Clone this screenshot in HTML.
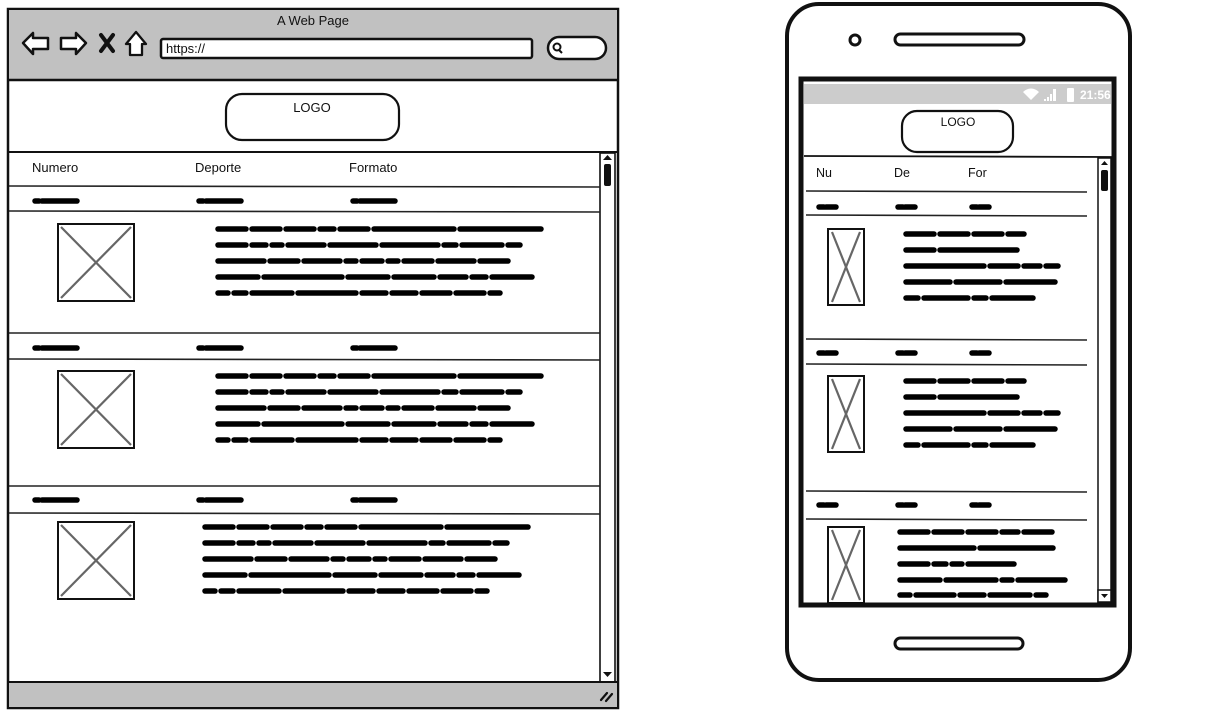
<!DOCTYPE html>
<html><head><meta charset="utf-8"><style>
html,body{margin:0;padding:0;background:#fff;width:1210px;height:718px;overflow:hidden}
svg{display:block}
text{font-family:"Liberation Sans",sans-serif;fill:#111}
.s{stroke:#000;stroke-width:5.5;stroke-linecap:round;fill:none}
.ln{stroke:#222;stroke-width:1.6;fill:none}
.x{stroke:#666;stroke-width:2.2}
</style></head><body>
<svg width="1210" height="718" viewBox="0 0 1210 718" xmlns="http://www.w3.org/2000/svg">
<defs>
<g id="bh">
 <line class="s" x1="1" y1="0" x2="43" y2="0" stroke-dasharray="4 3 40 3"/>
</g>
<g id="img">
 <rect x="0" y="0" width="76" height="77" fill="#fff" stroke="#111" stroke-width="2"/>
 <line class="x" x1="3" y1="3" x2="73" y2="74"/><line class="x" x1="73" y1="3" x2="3" y2="74"/>
</g>
<g id="pimg">
 <rect x="0" y="0" width="36" height="76" fill="#fff" stroke="#111" stroke-width="2"/>
 <line class="x" x1="4" y1="3" x2="32" y2="73"/><line class="x" x1="32" y1="3" x2="4" y2="73"/>
</g>
<g id="para">
 <line class="s" x1="2" y1="0" x2="325" y2="0" stroke-dasharray="28 6 28 6 28 6 14 6 28 6 80 6 81 200"/>
 <line class="s" x1="2" y1="16" x2="308" y2="16" stroke-dasharray="28 6 14 6 10 6 36 6 46 6 56 6 12 6 40 6 12 200"/>
 <line class="s" x1="2" y1="32" x2="300" y2="32" stroke-dasharray="46 6 28 6 36 6 10 6 20 6 10 6 28 6 36 6 28 200"/>
 <line class="s" x1="2" y1="48" x2="316" y2="48" stroke-dasharray="40 6 78 6 40 6 40 6 26 6 14 6 40 200"/>
 <line class="s" x1="2" y1="64" x2="290" y2="64" stroke-dasharray="10 6 12 6 40 6 58 6 24 6 24 6 28 6 28 6 10 200"/>
</g>
<g id="pb"><line class="s" x1="1" y1="0" x2="18" y2="0" stroke-dasharray="5 2 12 3"/></g>
<g id="ppara">
 <line class="s" x1="1" y1="0" x2="122" y2="0" stroke-dasharray="28 6 28 6 28 6 16 200"/>
 <line class="s" x1="1" y1="16" x2="112" y2="16" stroke-dasharray="28 6 78 200"/>
 <line class="s" x1="1" y1="32" x2="153" y2="32" stroke-dasharray="78 6 28 6 16 6 12 200"/>
 <line class="s" x1="1" y1="48" x2="150" y2="48" stroke-dasharray="44 6 44 6 50 200"/>
 <line class="s" x1="1" y1="64" x2="128" y2="64" stroke-dasharray="12 6 44 6 12 6 44 200"/>
</g>
</defs>

<!-- Browser -->
<rect x="8" y="9" width="610" height="699" fill="#fff" stroke="#111" stroke-width="2.5"/>
<rect x="9" y="10" width="608" height="70" fill="#c1c1c1"/>
<line x1="8" y1="80" x2="618" y2="80" stroke="#111" stroke-width="2.5"/>
<text x="313" y="25" font-size="13" text-anchor="middle">A Web Page</text>
<path d="M23 43 L33 33 L33 38 L48 38 L48 49 L33 49 L33 54 Z" fill="#fff" stroke="#111" stroke-width="2.5" stroke-linejoin="round"/>
<path d="M86 43 L76 33 L76 38 L61 38 L61 49 L76 49 L76 54 Z" fill="#fff" stroke="#111" stroke-width="2.5" stroke-linejoin="round"/>
<path d="M101 35 L113 51 M113 35 L101 51" stroke="#111" stroke-width="4" stroke-linecap="round"/>
<path d="M136 32 L126 44 L130 44 L130 55 L142 55 L142 44 L146 44 Z" fill="#fff" stroke="#111" stroke-width="2.3" stroke-linejoin="round"/>
<rect x="161" y="39" width="371" height="19" rx="2" fill="#fff" stroke="#111" stroke-width="2.5"/>
<text x="166" y="53" font-size="13">https://</text>
<rect x="548" y="37" width="58" height="22" rx="11" fill="#fff" stroke="#111" stroke-width="2.5"/>
<circle cx="557" cy="47" r="3.5" fill="none" stroke="#111" stroke-width="2"/><line x1="559" y1="50" x2="562" y2="53" stroke="#111" stroke-width="2"/>

<rect x="226" y="94" width="173" height="46" rx="16" fill="#fff" stroke="#111" stroke-width="2.2"/>
<text x="312" y="112" font-size="13" text-anchor="middle">LOGO</text>

<line x1="9" y1="152" x2="618" y2="152" stroke="#111" stroke-width="2"/>
<rect x="600" y="153" width="15" height="529" fill="#fff" stroke="#111" stroke-width="1.6"/>
<path d="M603 160 L607.5 155 L612 160 Z" fill="#111"/>
<rect x="604" y="164" width="7" height="22" rx="2" fill="#111"/>
<path d="M603 672 L607.5 677 L612 672 Z" fill="#111"/>

<text x="32" y="172" font-size="13">Numero</text>
<text x="195" y="172" font-size="13">Deporte</text>
<text x="349" y="172" font-size="13">Formato</text>

<line class="ln" x1="9" y1="186" x2="600" y2="187"/>
<use href="#bh" x="34" y="201"/><use href="#bh" x="198" y="201"/><use href="#bh" x="352" y="201"/>
<line class="ln" x1="9" y1="211" x2="600" y2="212"/>
<use href="#img" x="58" y="224"/>
<use href="#para" x="216" y="229"/>

<line class="ln" x1="9" y1="333" x2="600" y2="333"/>
<use href="#bh" x="34" y="348"/><use href="#bh" x="198" y="348"/><use href="#bh" x="352" y="348"/>
<line class="ln" x1="9" y1="359" x2="600" y2="360"/>
<use href="#img" x="58" y="371"/>
<use href="#para" x="216" y="376"/>

<line class="ln" x1="9" y1="486" x2="600" y2="486"/>
<use href="#bh" x="34" y="500"/><use href="#bh" x="198" y="500"/><use href="#bh" x="352" y="500"/>
<line class="ln" x1="9" y1="513" x2="600" y2="514"/>
<use href="#img" x="58" y="522"/>
<use href="#para" x="203" y="527"/>

<rect x="9" y="682" width="608" height="25" fill="#c1c1c1"/>
<line x1="8" y1="682" x2="618" y2="682" stroke="#111" stroke-width="2"/>
<path d="M601 700 L607 693 M606 701 L612 694" stroke="#111" stroke-width="2.2" stroke-linecap="round"/>

<!-- Phone -->
<rect x="787" y="4" width="343" height="676" rx="32" fill="#fff" stroke="#111" stroke-width="4"/>
<circle cx="855" cy="40" r="5" fill="none" stroke="#111" stroke-width="3"/>
<rect x="895" y="34" width="129" height="11" rx="5.5" fill="#fff" stroke="#111" stroke-width="3"/>
<rect x="895" y="638" width="128" height="11" rx="5.5" fill="#fff" stroke="#111" stroke-width="3"/>

<rect x="801" y="79" width="313" height="526" fill="#fff" stroke="#111" stroke-width="5"/>
<rect x="804" y="84" width="307" height="20" fill="#cccccc"/>
<path d="M1023 92 A11 11 0 0 1 1039 92 L1031 100 Z" fill="#fff"/>
<path d="M1044 101 h2 v-2 h-2z M1047 101 h2 v-4 h-2z M1050 101 h2 v-7 h-2z M1053 101 h3 v-12 h-3z" fill="#fff"/>
<rect x="1067" y="88" width="7" height="14" rx="1" fill="#fff"/>
<text x="1080" y="99" font-size="12" font-weight="bold" style="fill:#fff">21:56</text>

<rect x="902" y="111" width="111" height="41" rx="15" fill="#fff" stroke="#111" stroke-width="2.2"/>
<text x="958" y="126" font-size="12" text-anchor="middle">LOGO</text>

<line x1="804" y1="156" x2="1112" y2="157" stroke="#111" stroke-width="1.8"/>
<rect x="1098" y="158" width="13" height="444" fill="#fff" stroke="#111" stroke-width="1.5"/>
<path d="M1101 165 L1104.5 161 L1108 165 Z" fill="#111"/>
<rect x="1101" y="170" width="7" height="21" rx="2" fill="#111"/>

<text x="816" y="177" font-size="12.5">Nu</text>
<text x="894" y="177" font-size="12.5">De</text>
<text x="968" y="177" font-size="12.5">For</text>

<line class="ln" x1="806" y1="191" x2="1087" y2="192"/>
<use href="#pb" x="818" y="207"/><use href="#pb" x="897" y="207"/><use href="#pb" x="971" y="207"/>
<line class="ln" x1="806" y1="215" x2="1087" y2="216"/>
<use href="#pimg" x="828" y="229"/>
<use href="#ppara" x="905" y="234"/>

<line class="ln" x1="806" y1="339" x2="1087" y2="340"/>
<use href="#pb" x="818" y="353"/><use href="#pb" x="897" y="353"/><use href="#pb" x="971" y="353"/>
<line class="ln" x1="806" y1="364" x2="1087" y2="365"/>
<use href="#pimg" x="828" y="376"/>
<use href="#ppara" x="905" y="381"/>

<line class="ln" x1="806" y1="491" x2="1087" y2="492"/>
<use href="#pb" x="818" y="505"/><use href="#pb" x="897" y="505"/><use href="#pb" x="971" y="505"/>
<line class="ln" x1="806" y1="519" x2="1087" y2="520"/>
<use href="#pimg" x="828" y="527"/>
<g transform="translate(899,532)">
 <line class="s" x1="1" y1="0" x2="160" y2="0" stroke-dasharray="28 6 28 6 28 6 16 6 28 200"/>
 <line class="s" x1="1" y1="16" x2="154" y2="16" stroke-dasharray="74 6 74 200"/>
 <line class="s" x1="1" y1="32" x2="122" y2="32" stroke-dasharray="28 6 12 6 10 6 46 200"/>
 <line class="s" x1="1" y1="48" x2="166" y2="48" stroke-dasharray="40 6 50 6 10 6 54 200"/>
 <line class="s" x1="1" y1="63" x2="162" y2="63" stroke-dasharray="10 6 38 6 24 6 40 6 10 200"/>
</g>
<line x1="799" y1="605" x2="1116" y2="605" stroke="#111" stroke-width="5"/>
<rect x="1098" y="590" width="13" height="12" fill="#fff" stroke="#111" stroke-width="1.5"/>
<path d="M1101 594 L1104.5 598 L1108 594 Z" fill="#111"/>
</svg>
</body></html>
